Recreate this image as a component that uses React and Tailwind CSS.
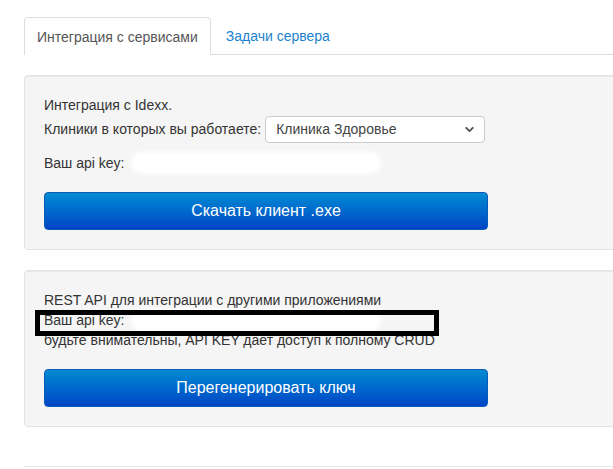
import { ChevronDown } from 'lucide-react';

const ApiKeyLine = ({ blurWidth }) => (
  <div className="flex h-[20px] items-center">
    <span>Ваш api key:</span>
    <div className="ml-[6px] h-[22px] rounded-full bg-white blur-[2px]" style={{ width: blurWidth }} />
  </div>
);

const BlueButton = ({ children }) => (
  <button className="mt-[19px] flex h-[38px] w-[444px] items-center justify-center rounded-[4px] border border-[#0a5bb8] bg-gradient-to-b from-[#0a8ad2] to-[#0043c6] text-[16px] text-white">
    {children}
  </button>
);

export default function App() {
  return (
    <div className="h-[469px] w-[613px] overflow-hidden bg-white font-['Liberation_Sans',Arial,sans-serif] text-[14px] leading-[20px] text-[#333]">
      <div className="pl-[24px] pt-[17px]">
        <div className="flex h-[38px] w-[640px] border-b border-[#ddd]">
          <div className="-mb-px flex h-[38px] items-center rounded-t-[4px] border border-b-0 border-[#ddd] bg-white px-[12px] text-[#555]">
            Интеграция с сервисами
          </div>
          <div className="flex h-[37px] items-center px-[15px] text-[#1b82cf]">Задачи сервера</div>
        </div>

        <div className="mt-[20px] w-[640px] rounded-[4px] border border-[#e3e3e3] bg-[#f5f5f5] p-[19px] shadow-[inset_0_1px_1px_rgba(0,0,0,0.05)]">
          <div>Интеграция с Idexx.</div>
          <div className="flex h-[28px] items-center">
            <span>Клиники в которых вы работаете:</span>
            <div className="ml-[4px] flex h-[27px] w-[220px] items-center justify-between rounded-[4px] border border-[#ccc] bg-white pl-[10px] pr-[8px] text-[#444]">
              <span>Клиника Здоровье</span>
              <ChevronDown size={13} strokeWidth={3.5} className="text-[#555]" />
            </div>
          </div>
          <div className="mt-[10px]">
            <ApiKeyLine blurWidth={250} />
          </div>
          <BlueButton>Скачать клиент .exe</BlueButton>
        </div>

        <div className="relative mt-[20px] w-[640px] rounded-[4px] border border-[#e3e3e3] bg-[#f5f5f5] p-[19px] shadow-[inset_0_1px_1px_rgba(0,0,0,0.05)]">
          <div>REST API для интеграции с другими приложениями</div>
          <ApiKeyLine blurWidth={250} />
          <div>будьте внимательны, API KEY дает доступ к полному CRUD</div>
          <div className="absolute left-[10px] top-[39px] h-[26px] w-[404px] border-[5px] border-black" />
          <BlueButton>Перегенерировать ключ</BlueButton>
        </div>

        <div className="mt-[39px] h-px w-[640px] bg-[#e5e5e5]" />
      </div>
    </div>
  );
}
